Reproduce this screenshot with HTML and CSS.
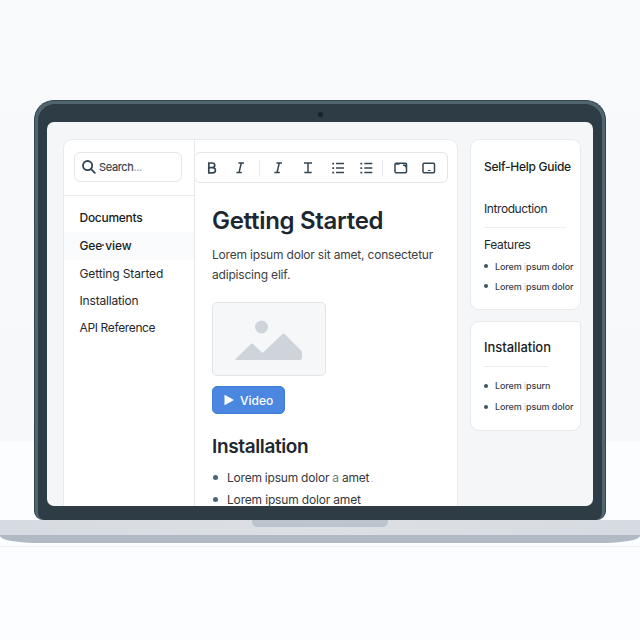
FILE: index.html
```html
<!DOCTYPE html>
<html lang="en">
<head>
<meta charset="utf-8">
<title>Getting Started</title>
<link rel="stylesheet" href="styles.css">
</head>
<body>
<div class="lid">
  <div class="bezel">
    <span class="camera"></span>
    <div class="screen">
      <div class="app">
        <aside class="sidebar">
          <div class="search-area">
            <div class="search">
              <svg width="14" height="14" viewBox="0 0 14 14" fill="none" stroke="#2b4355" stroke-width="1.8" stroke-linecap="round"><circle cx="5.6" cy="5.6" r="4.6"/><path d="M9.1 9.1 12.8 12.8"/></svg>
              <span class="search-text">Search<span class="faint">...</span></span>
            </div>
          </div>
          <nav class="nav">
            <div class="nav-title"><span class="t-docs">Documents</span></div>
            <div class="nav-item active"><span class="t-view">Gee<span class="speck"></span>view</span></div>
            <div class="nav-item"><span class="t-start">Getting Started</span></div>
            <div class="nav-item"><span class="t-inst">Installation</span></div>
            <div class="nav-item"><span class="t-api">API Reference</span></div>
          </nav>
        </aside>
        <main class="main">
          <div class="toolbar">
            <svg width="252" height="29" viewBox="195 153 252 29" fill="none" stroke="#344652" stroke-width="1.5">
              <path stroke-width="1.7" d="M208.800 163v9.800h4a2.600 2.600 0 0 0 0-5.200H209h3.400a2.300 2.300 0 0 0 0-4.600H208"/>
              <path d="M238.4 163h5.6M236.4 172.6h5.4M241.3 163l-2.3 9.6"/>
              <path d="M276.4 163h5.6M274.4 172.6h5.4M279.3 163l-2.3 9.6"/>
              <path d="M304 163h8M304.3 172.6h7.4M308 163v9.6"/>
              <path d="M336 163.5h8M336 168h8M336 172.5h8M364.300 163.5h8M364.300 168h8M364.300 172.500h8"/>
              <path stroke-dasharray="1.7 2.8" stroke-width="1.800" d="M333.200 162.700v11M361.300 162.700v11"/>
              <path stroke="#e7eaed" stroke-width="1" d="M259.500 160v16M382.500 160v16"/>
              <rect x="395" y="163.300" width="11.500" height="9.400" rx="1"/><path d="M395.500 164h4M403 165.300h2.500v2"/>
              <rect x="423" y="163.300" width="11.500" height="9.400" rx="1"/><path stroke-width="1.200" d="M428 170.500h2.500"/>
            </svg>
          </div>
          <article class="article">
            <h1><span>Getting Started</span></h1>
            <p><span class="p1">Lorem ipsum dolor sit amet, consectetur</span><br><span class="p2">adipiscing elif.</span></p>
            <div class="image">
              <svg width="68" height="42" viewBox="0 0 68 42" fill="#ced4da"><circle cx="26.500" cy="7" r="6.500"/><path d="M1 38.500 16 24q1-1 2 0l9.500 9L47.500 14q1-1 2 0L67 31.500V38q0 2-2 2H1.500q-2 0-.5-1.500Z"/></svg>
            </div>
            <button class="video"><svg width="10" height="12" viewBox="0 0 10 12"><path fill="#fff" d="M.5.800v10.400L10 6Z"/></svg><span>Video</span></button>
            <h2><span>Installation</span></h2>
            <ul class="list">
              <li><span class="l1">Lorem ipsum dolor <span class="soft">a</span> amet<span class="faint dot">.</span></span></li>
              <li><span class="l2">Lorem ipsum dolor amet</span></li>
            </ul>
          </article>
        </main>
      </div>
      <div class="rail">
        <section class="card guide">
          <h3><span class="g-title">Self-Help Guide</span></h3>
          <div class="topic intro"><span class="g-intro">Introduction</span></div>
          <div class="topic features"><span class="g-feat">Features</span></div>
          <ul class="mini"><li>Lorem <span class="ghost">i</span>psum dolor</li><li>Lorem <span class="ghost">i</span>psum dolor</li></ul>
        </section>
        <section class="card install">
          <h3><span class="i-title">Installation</span></h3>
          <hr>
          <ul class="mini wide"><li>Lorem <span class="ghost">i</span>psurn</li><li>Lorem <span class="ghost">i</span>psum dolor</li></ul>
        </section>
      </div>
    </div>
  </div>
</div>
<div class="base"><div class="notch"></div></div>
<div class="foot"></div>
<div class="shadow"></div>
</body>
</html>
```
FILE: styles.css
```css
* { box-sizing: border-box; }
body {
  margin: 0; width: 640px; height: 640px; overflow: hidden; padding-top: 100px;
  background: linear-gradient(#f8fafb 0, #f6f8fa 441px, #fcfdfe 442px, #fbfdfe 640px);
  font-family: Inter, "Liberation Sans", sans-serif; color: #25292e;
}
h1, h2, h3, p, ul { margin: 0; padding: 0; list-style: none; font-weight: 500; }
span { white-space: nowrap; }
.lid { width: 572px; height: 420px; margin: 0 auto; padding: 3px 3px 0 3px; background: #50656f; border: 1px solid #34474f; border-bottom: 0; border-radius: 20px 20px 9px 9px; }
.bezel { position: relative; height: 416px; padding: 18px 9px 14px 9px; background: #2e3c45; border-radius: 17px 17px 7px 7px; }
.camera { position: absolute; left: 280px; top: 8px; width: 5px; height: 5px; border-radius: 50%; background: #17232b; }
.screen { height: 384px; display: flex; gap: 12px; padding: 17px 12px 0 16px; background: #f4f6f8; border-radius: 7px; overflow: hidden; }
.app { width: 395px; height: 370px; display: flex; background: #fff; border: 1px solid #e7eaed; border-bottom: 0; border-radius: 9px 9px 0 0; }
.sidebar { width: 131px; border-right: 1px solid #e7eaed; }
.search-area { height: 56px; padding: 12px 12px 0 10px; border-bottom: 1px solid #e7eaed; }
.search { height: 30px; display: flex; align-items: center; gap: 3px; padding-left: 7px; border: 1px solid #e2e6e9; border-radius: 6px; }
.search-text { font-size: 11px; line-height: 16px; letter-spacing: -.35px; color: #364049; -webkit-text-stroke: .15px; }
.faint { color: #a3a9af; }
.nav { padding-top: 8px; font-size: 12px; line-height: 27px; }
.nav-title, .nav-item { height: 27px; padding-left: 15.5px; }
.nav-title { color: #191d22; font-weight: 500; letter-spacing: -.28px; }
.nav-item.active { height: 28px; margin: 1px 0 0; background: #fafbfc; color: #191d22; font-weight: 500; letter-spacing: -.1px; }
.t-start { letter-spacing: -.12px; }
.t-inst { letter-spacing: -.17px; }
.t-api { letter-spacing: -.36px; }
.speck { display: inline-block; width: 2px; height: 2px; margin: 0 1px 4px 0; border-radius: 50%; background: #873747; }
.main { flex: 1; margin-left: -1px; }
.toolbar { position: relative; width: 254px; height: 31px; margin-top: 12px; background: #fff; border: 1px solid #e2e6e9; border-radius: 6px; }
.toolbar svg { display: block; }
.article { padding: 19px 0 0 18px; }
h1 { height: 37px; font-size: 24px; line-height: 37px; font-weight: 600; letter-spacing: -.3px; color: #1d2731; }
p { height: 63px; padding-top: 6px; font-size: 12px; line-height: 20px; font-weight: 400; letter-spacing: -.19px; color: #3c4043; }
.image { width: 114px; height: 74px; display: flex; padding: 17px 0 0 22px; border: 1px solid #e0e4e7; border-radius: 5px; background: #f5f7f9; }
.video { width: 73px; height: 28px; display: flex; align-items: center; gap: 6px; margin-top: 10px; padding: 0 0 0 11px; border: 1px solid #3f7cd8; border-radius: 5px; background: #4b87e1; color: #fff; font: 500 12px Inter, sans-serif; }
h2 { height: 30px; margin-top: 17px; font-size: 19px; line-height: 31px; font-weight: 600; letter-spacing: -.37px; color: #1d2731; }
.list { padding-top: 6px; }
.list li { height: 21.5px; display: flex; align-items: center; gap: 9px; font-size: 12px; font-weight: 400; letter-spacing: -.17px; color: #34383c; }
.list li::before { content: ""; width: 5px; height: 5px; margin-left: 1px; border-radius: 50%; background: #4d6577; }
.l1 { letter-spacing: -.22px; }
.soft { color: #777b80; }
.dot { margin-left: 1px; color: #d0d3d6; }
.rail { width: 111px; }
.card { padding-left: 13px; background: #fff; border: 1px solid #e7eaed; border-radius: 9px; }
.guide { height: 171px; padding-top: 15px; }
h3 { height: 24px; font-size: 12px; line-height: 24px; letter-spacing: -.27px; color: #191d22; }
.topic { font-size: 12px; line-height: 20px; letter-spacing: -.42px; }
.intro { width: 82px; height: 49px; padding-top: 20px; border-bottom: 1px solid #eceef0; }
.features { height: 28px; padding-top: 7px; letter-spacing: -.32px; }
.mini li { height: 20px; display: flex; align-items: center; font-size: 9px; letter-spacing: -.11px; white-space: pre; color: #3a4148; }
.mini li::before { content: ""; width: 4px; height: 4px; margin-right: 7px; border-radius: 50%; background: #3d5365; }
.ghost { color: #c9cdd2; }
.install { height: 110px; margin-top: 11px; padding-top: 13px; border-top-right-radius: 3px; }
.install h3 { font-size: 13px; letter-spacing: -.05px; }
.install hr { width: 64px; height: 1px; margin: 7px 0 8px; border: 0; background: #e9ebed; }
.mini.wide li { height: 21px; }
.base { height: 15px; background: linear-gradient(90deg, #d6dbe1, #dce0e5 50%, #d6dbe1); }
.notch { width: 136px; height: 7px; margin: 0 auto; background: #bcc4cd; border-radius: 0 0 5px 5px; }
.foot { height: 8px; background: #b0b9c4; border-radius: 0 0 40px 40px / 0 0 7px 7px; }
.shadow { height: 4px; border-bottom: 1px solid #eef1f4; }
```
